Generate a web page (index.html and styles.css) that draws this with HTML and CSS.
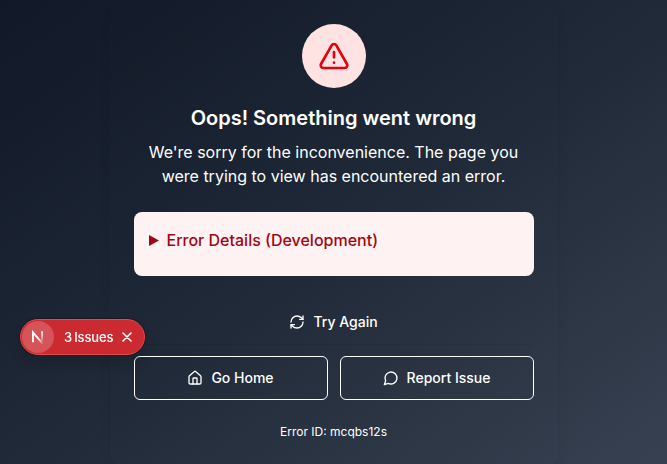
FILE: index.html
```html
<!DOCTYPE html>
<html lang="en">
<head>
<meta charset="utf-8">
<title>Something went wrong</title>
<link rel="stylesheet" href="styles.css">
</head>
<body>
<main class="card">
  <div class="badge">
    <svg class="icon alert" viewBox="0 0 24 24"><path d="m21.73 18-8-14a2 2 0 0 0-3.48 0l-8 14A2 2 0 0 0 4 21h16a2 2 0 0 0 1.73-3"/><path d="M12 9v4"/><path d="M12 17h.01"/></svg>
  </div>
  <h1 class="title">Oops! Something went wrong</h1>
  <p class="description">We're sorry for the inconvenience. The page you were trying to view has encountered an error.</p>
  <div class="details">
    <svg class="marker" viewBox="0 0 10 11"><path d="M0 0 10 5.5 0 11z"/></svg>
    <span>Error Details (Development)</span>
  </div>
  <button class="button retry">
    <svg class="icon" viewBox="0 0 24 24"><path d="M3 12a9 9 0 0 1 9-9 9.75 9.75 0 0 1 6.74 2.74L21 8"/><path d="M21 3v5h-5"/><path d="M21 12a9 9 0 0 1-9 9 9.75 9.75 0 0 1-6.74-2.74L3 16"/><path d="M8 16H3v5"/></svg>
    Try Again
  </button>
  <div class="actions">
    <button class="button outline">
      <svg class="icon" viewBox="0 0 24 24"><path d="M15 21v-8a1 1 0 0 0-1-1h-4a1 1 0 0 0-1 1v8"/><path d="M3 10a2 2 0 0 1 .709-1.528l7-5.999a2 2 0 0 1 2.582 0l7 5.999A2 2 0 0 1 21 10v9a2 2 0 0 1-2 2H5a2 2 0 0 1-2-2z"/></svg>
      Go Home
    </button>
    <button class="button outline">
      <svg class="icon" viewBox="0 0 24 24"><path d="M7.9 20A9 9 0 1 0 4 16.1L2 22Z"/></svg>
      Report Issue
    </button>
  </div>
  <p class="error-id">Error ID: mcqbs12s</p>
</main>
<aside class="issues">
  <div class="mark">
    <svg viewBox="0 0 14 14">
      <defs>
        <linearGradient id="diagonal" gradientUnits="userSpaceOnUse" x1="8.5" y1="8.5" x2="12.5" y2="14"><stop stop-color="#fff"/><stop offset="1" stop-color="#fff" stop-opacity="0"/></linearGradient>
        <linearGradient id="stem" x1="0" y1="0" x2="0" y2="1"><stop stop-color="#fff"/><stop offset="1" stop-color="#fff" stop-opacity="0.2"/></linearGradient>
      </defs>
      <path d="M2 12.2V2.4L11.6 13.6" fill="none" stroke="url(#diagonal)" stroke-width="1.9"/>
      <rect x="10.2" y="1.2" width="1.8" height="9.8" fill="url(#stem)"/>
    </svg>
  </div>
  <span class="count">3</span><span class="label">Issues</span>
  <svg class="close" viewBox="0 0 10 10"><path d="m1 1 8 8M9 1 1 9"/></svg>
</aside>
</body>
</html>
```
FILE: styles.css
```css
* {
  box-sizing: border-box;
}

body {
  margin: 0;
  height: 464px;
  display: flex;
  justify-content: center;
  overflow: hidden;
  background: linear-gradient(to bottom right, #111827, #1f2937, #374151);
  color: #fff;
  font-family: Inter, sans-serif;
}

.card {
  width: 448px;
  height: 464px;
  padding: 24px;
  border-radius: 8px;
  box-shadow: 0 10px 15px -3px rgb(0 0 0 / 0.07), 0 4px 6px -4px rgb(0 0 0 / 0.07);
  display: flex;
  flex-direction: column;
}

.icon {
  width: 16px;
  height: 16px;
  flex: none;
  fill: none;
  stroke: currentColor;
  stroke-width: 2;
  stroke-linecap: round;
  stroke-linejoin: round;
}

.badge {
  width: 64px;
  height: 64px;
  flex: none;
  align-self: center;
  display: grid;
  place-items: center;
  border-radius: 50%;
  background: #ffe2e2;
  color: #e7000b;
}

.alert {
  width: 32px;
  height: 32px;
}

.title {
  margin: 16px 0 0;
  font-size: 20px;
  line-height: 28px;
  font-weight: 600;
  text-align: center;
}

.description {
  margin: 8px 0 0;
  font-size: 16px;
  line-height: 24px;
  text-align: center;
}

.details {
  height: 64px;
  flex: none;
  margin-top: 24px;
  padding: 16px;
  display: flex;
  align-items: flex-start;
  border-radius: 8px;
  background: #fef2f2;
  color: #9f0712;
  font-size: 16px;
  line-height: 24px;
  font-weight: 500;
}

.marker {
  width: 10px;
  height: 11px;
  margin: 7px 8px 0 -1px;
  fill: currentColor;
}

.button {
  height: 44px;
  padding: 0 16px;
  display: flex;
  align-items: center;
  justify-content: center;
  gap: 8px;
  border: 0;
  border-radius: 6px;
  background: transparent;
  color: #fff;
  font: 500 14px/20px Inter, sans-serif;
}

.retry {
  margin-top: 24px;
  flex: none;
  box-shadow: 0 1px 2px rgb(0 0 0 / 0.07);
}

.actions {
  margin-top: 12px;
  display: grid;
  grid-template-columns: 1fr 1fr;
  gap: 12px;
}

.outline {
  border: 1px solid #fff;
}

.error-id {
  margin: 24px 0 0;
  font-size: 12px;
  line-height: 16px;
  text-align: center;
}

.issues {
  position: fixed;
  left: 20px;
  top: 319px;
  width: 125px;
  height: 36px;
  padding: 1px;
  display: flex;
  align-items: center;
  border: 1px solid #e5484d;
  border-radius: 18px;
  background: #ca2a30;
  box-shadow: 0 0 0 1px rgb(0 0 0 / 0.25), 0 8px 16px -4px rgb(0 0 0 / 0.2);
  font-size: 13px;
  line-height: 16px;
  font-weight: 500;
}

.mark {
  width: 32px;
  height: 32px;
  display: grid;
  place-items: center;
  border-radius: 50%;
  background: rgb(255 255 255 / 0.2);
}

.mark svg {
  width: 14px;
  height: 14px;
}

.count {
  margin-left: 10px;
}

.label {
  margin-left: 2px;
  letter-spacing: -0.15px;
}

.close {
  width: 10px;
  height: 10px;
  margin-left: 9px;
  fill: none;
  stroke: #fff;
  stroke-width: 1.6;
  stroke-linecap: round;
}
```
